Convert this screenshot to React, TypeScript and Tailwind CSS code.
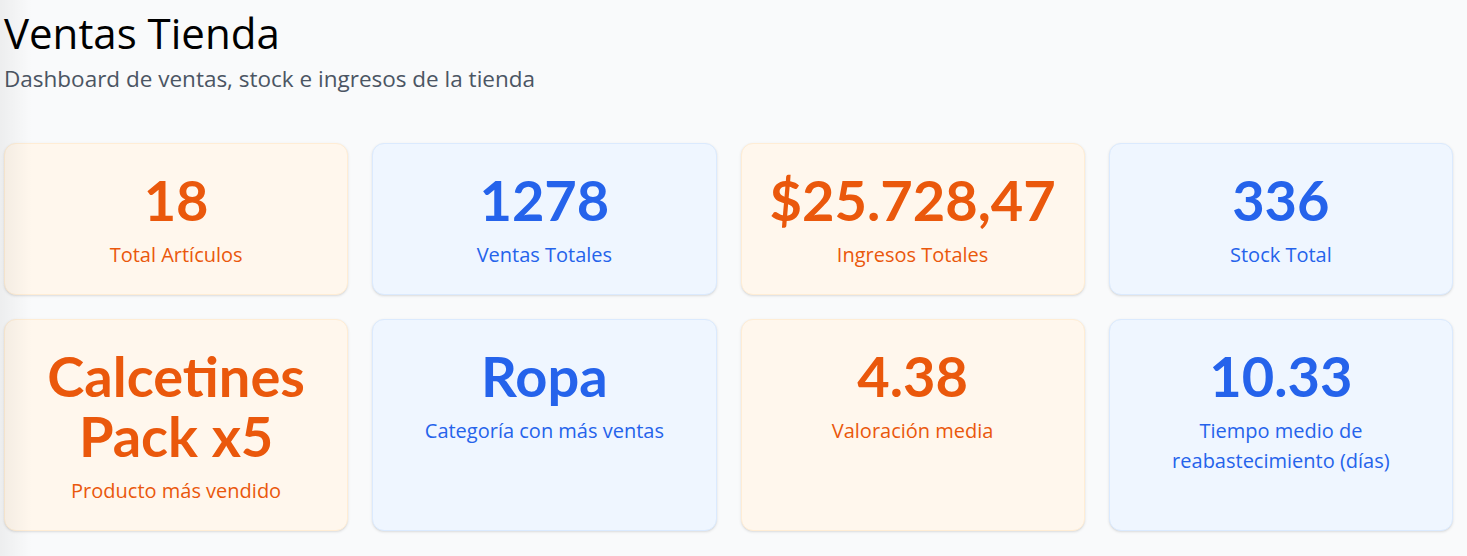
const stats = [
  { value: "18", label: "Total Artículos", tone: "orange" },
  { value: "1278", label: "Ventas Totales", tone: "blue" },
  { value: "$25.728,47", label: "Ingresos Totales", tone: "orange" },
  { value: "336", label: "Stock Total", tone: "blue" },
  { value: "Calcetines Pack x5", label: "Producto más vendido", tone: "orange" },
  { value: "Ropa", label: "Categoría con más ventas", tone: "blue" },
  { value: "4.38", label: "Valoración media", tone: "orange" },
  { value: "10.33", label: "Tiempo medio de reabastecimiento (días)", tone: "blue" },
];

const StatCard = ({ value, label, tone }: { value: string; label: string; tone: string }) => {
  const orange = tone === "orange";
  return (
    <div
      className={
        orange
          ? "rounded-xl border border-[#ffedd5] bg-[#fff7ed] p-6 text-center text-[#ea580c] shadow-sm"
          : "rounded-xl border border-[#dbeafe] bg-[#eff6ff] p-6 text-center text-[#2563eb] shadow-sm"
      }
    >
      <div className="pt-[2px] font-['Lato',sans-serif] text-[56px] font-bold leading-[60px]">{value}</div>
      <div className="mx-auto mt-[10px] max-w-[250px] text-xl leading-[30px]">{label}</div>
    </div>
  );
};

const App = () => {
  return (
    <div
      className="relative min-h-screen bg-[#f9fafb] pb-6 pl-1 pr-[14px] pt-3"
      style={{ fontFamily: '"Segoe UI", "Open Sans", sans-serif' }}
    >
      <div className="pointer-events-none absolute inset-y-0 left-0 w-8 bg-linear-to-r from-black/5 to-transparent" />
      <h1 className="text-[42px] font-normal leading-none text-black">Ventas Tienda</h1>
      <p className="mt-[11px] text-[22.5px] leading-7 text-[#4b5563]">Dashboard de ventas, stock e ingresos de la tienda</p>
      <div className="mt-[50px] grid grid-cols-4 gap-6">
        {stats.map((s) => (
          <StatCard key={s.label} {...s} />
        ))}
      </div>
    </div>
  );
};

export default App;
